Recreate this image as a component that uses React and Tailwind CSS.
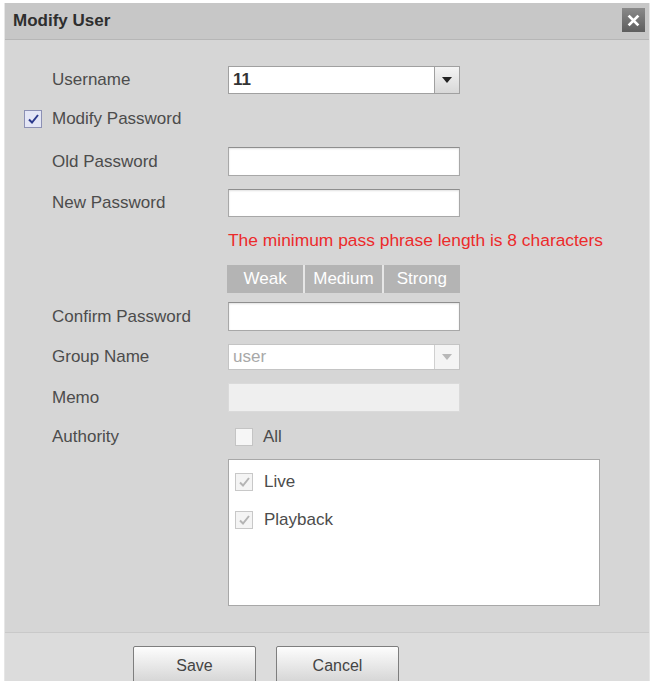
import React from 'react';

const font = { fontFamily: '"Liberation Sans", Arial, sans-serif' };

function Arrow({ disabled }) {
    return (
        <div className={`w-[25px] h-full flex items-center justify-center border-l ${disabled ? 'border-[#d0d0d0] bg-[#f4f4f4]' : 'border-[#a0a0a0] bg-gradient-to-b from-[#f4f4f4] to-[#d8d8d8]'}`}>
            <svg width="10" height="6" viewBox="0 0 10 6">
                <path d="M0 0h10L5 6z" fill={disabled ? '#b8b8b8' : '#222'} />
            </svg>
        </div>
    );
}

function Check({ variant }) {
    // variant: checked | disabled | empty
    if (variant === 'empty') {
        return <div className="w-[18px] h-[18px] border border-[#c4c4c4] bg-[#f6f6f6]"></div>;
    }
    const checked = variant === 'checked';
    return (
        <div className={`w-[18px] h-[18px] border flex items-center justify-center ${checked ? 'border-[#8c90b4] bg-[#e4e6f6]' : 'border-[#c8c8c8] bg-[#f4f4f4]'}`}>
            <svg width="11" height="10" viewBox="0 0 11 10">
                <path d="M1 5.5l3 3L10 1" fill="none" stroke={checked ? '#2c3a8c' : '#b4b4b4'} strokeWidth="2" />
            </svg>
        </div>
    );
}

function Row({ label, className, children }) {
    return (
        <div className={`flex items-center ${className}`}>
            <div className="w-[223px] pl-[47px] text-[17px] text-[#4c4c4c]">{label}</div>
            {children}
        </div>
    );
}

function TextBox({ className = '' }) {
    return <div className={`w-[232px] h-full border border-[#a8a8a8] border-t-[#8e8e8e] bg-white shadow-[inset_0_1px_2px_rgba(0,0,0,0.12)] ${className}`}></div>;
}

export default function App() {
    return (
        <div className="w-[654px] h-[681px] overflow-hidden bg-white pt-[3px] pl-[4px] pr-[4px]" style={font}>
            <div className="border-l border-r border-[#e6e6e6] bg-[#d6d6d6]">
                {/* header */}
                <div className="h-[37px] bg-[#c7c7c7] border-b border-[#b6b6b6] flex items-center justify-between pl-[8px] pr-[4px]">
                    <div className="text-[17px] font-bold text-[#2e2e2e]">Modify User</div>
                    <div className="w-[23px] h-[24px] mb-[2px] bg-gradient-to-b from-[#8a8a8a] to-[#5e5e5e] flex items-center justify-center">
                        <svg width="13" height="13" viewBox="0 0 12 12">
                            <path d="M1.5 1.5l9 9M10.5 1.5l-9 9" stroke="#fff" strokeWidth="2.6" />
                        </svg>
                    </div>
                </div>

                {/* body */}
                <div className="flex flex-col pb-[26px]">
                    <Row label="Username" className="mt-[26px] h-[28px]">
                        <div className="w-[232px] h-full border border-[#a0a0a0] bg-white flex items-stretch">
                            <div className="flex-1 pl-[4px] flex items-center text-[17px] font-bold text-[#333]">11</div>
                            <Arrow />
                        </div>
                    </Row>

                    <div className="mt-[12px] h-[26px] flex items-center pl-[19px] gap-[10px]">
                        <Check variant="checked" />
                        <span className="text-[17px] text-[#4c4c4c]">Modify Password</span>
                    </div>

                    <Row label="Old Password" className="mt-[15px] h-[29px]">
                        <TextBox />
                    </Row>
                    <Row label="New Password" className="mt-[13px] h-[28px]">
                        <TextBox />
                    </Row>

                    <div className="mt-[12px] h-[22px] pl-[223px] flex items-center text-[17.4px] text-[#ec2b2b] whitespace-nowrap">
                        The minimum pass phrase length is 8 characters
                    </div>

                    <div className="mt-[14px] h-[28px] pl-[222px] flex">
                        <div className="w-[233px] flex gap-[2px] bg-[#e6e6e6]">
                            <div className="flex-1 bg-[#b4b4b4] text-white text-[17px] flex items-center justify-center">Weak</div>
                            <div className="flex-1 bg-[#b4b4b4] text-white text-[17px] flex items-center justify-center">Medium</div>
                            <div className="flex-1 bg-[#b4b4b4] text-white text-[17px] flex items-center justify-center">Strong</div>
                        </div>
                    </div>

                    <Row label="Confirm Password" className="mt-[9px] h-[29px]">
                        <TextBox />
                    </Row>

                    <Row label="Group Name" className="mt-[13px] h-[26px]">
                        <div className="w-[232px] h-full border border-[#c4c4c4] bg-white flex items-stretch">
                            <div className="flex-1 pl-[4px] flex items-center text-[17px] text-[#a8a8a8]">user</div>
                            <Arrow disabled />
                        </div>
                    </Row>

                    <Row label="Memo" className="mt-[13px] h-[29px]">
                        <div className="w-[232px] h-full border border-[#dadada] bg-[#efefef]"></div>
                    </Row>

                    <Row label="Authority" className="mt-[15px] h-[20px]">
                        <div className="pl-[7px] flex items-center gap-[10px]">
                            <Check variant="empty" />
                            <span className="text-[17px] text-[#4c4c4c]">All</span>
                        </div>
                    </Row>

                    <div className="mt-[12px] pl-[223px]">
                        <div className="w-[372px] h-[147px] border border-[#a8a8a8] bg-white pl-[6px] pt-[13px] flex flex-col gap-[20px]">
                            <div className="flex items-center gap-[11px] h-[18px]">
                                <Check variant="disabled" />
                                <span className="text-[17px] text-[#4c4c4c]">Live</span>
                            </div>
                            <div className="flex items-center gap-[11px] h-[18px]">
                                <Check variant="disabled" />
                                <span className="text-[17px] text-[#4c4c4c]">Playback</span>
                            </div>
                        </div>
                    </div>
                </div>

                {/* footer */}
                <div className="border-t border-[#c9c9c9] bg-[#dcdcdc] pt-[13px] pb-[10px] flex pl-[128px] gap-[20px]">
                    <button className="w-[123px] h-[40px] border border-[#7e7e7e] rounded-[2px] bg-gradient-to-b from-[#fdfdfd] to-[#d2d2d2] text-[16px] text-[#444]">Save</button>
                    <button className="w-[123px] h-[40px] border border-[#7e7e7e] rounded-[2px] bg-gradient-to-b from-[#fdfdfd] to-[#d2d2d2] text-[16px] text-[#444]">Cancel</button>
                </div>
            </div>
        </div>
    );
}
